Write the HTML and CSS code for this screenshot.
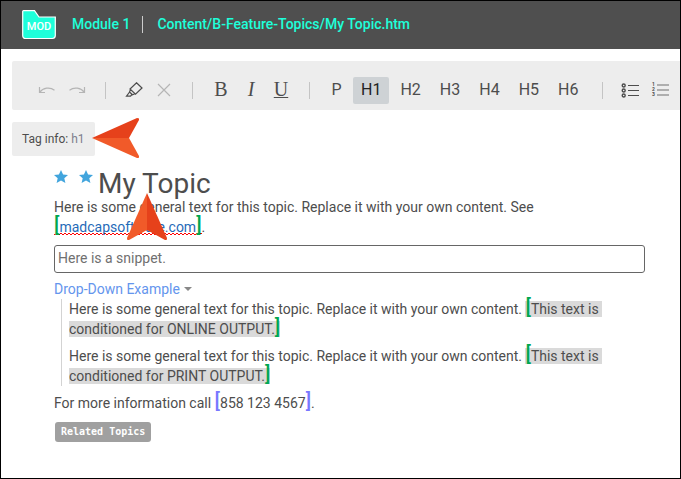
FILE: index.html
```html
<!DOCTYPE html>
<html lang="en">
<head>
<meta charset="utf-8">
<title>My Topic</title>
<link rel="stylesheet" href="styles.css">
</head>
<body>
<header class="header">
  <span class="badge">
    <svg class="badge-shape" viewBox="0 0 34 30" aria-hidden="true"><path d="M.7 1.5Q.7.7 1.5.7H12.5L17 7H33.3V25.5Q33.3 28.5 30.3 28.5H3.7Q.7 28.5.7 25.5Z" fill="#1effda" stroke="#fff" stroke-width="1.2"/></svg>
    <span class="badge-text">MOD</span>
  </span>
  <span class="module">Module 1</span>
  <span class="path">Content/B-Feature-Topics/My Topic.htm</span>
</header>
<main class="editor">
  <div class="toolbar" role="toolbar" aria-label="Formatting">
    <button class="tool muted" aria-label="Undo"><svg viewBox="0 0 18 10"><path d="M1.5 1V6.5H7M1.7 6.3C5 1.6 12 .8 16.5 4.2"/></svg></button>
    <button class="tool muted" aria-label="Redo"><svg viewBox="0 0 18 10"><path d="M16.5 1V6.5H11M16.3 6.3C13 1.6 6 .8 1.5 4.2"/></svg></button>
    <span class="sep"></span>
    <button class="tool" aria-label="Format painter"><svg class="square" viewBox="0 0 18 18"><path d="M11.5 .8L17 6L10.5 12.2L5 7ZM5.5 7.5L4.5 10L7.5 12.8L10 11.7M4.2 10.5L1.5 14.2H5.5L7 12.5"/></svg></button>
    <button class="tool muted" aria-label="Remove"><svg class="square" viewBox="0 0 18 18"><path d="M3 2L15 14M15 2L3 14"/></svg></button>
    <span class="sep"></span>
    <button class="tool letter">B</button>
    <button class="tool letter italic">I</button>
    <button class="tool letter underline">U</button>
    <span class="sep"></span>
    <div class="styles">
      <button class="style">P</button>
      <button class="style active">H1</button>
      <button class="style">H2</button>
      <button class="style">H3</button>
      <button class="style">H4</button>
      <button class="style">H5</button>
      <button class="style">H6</button>
    </div>
    <span class="sep wide"></span>
    <button class="tool" aria-label="Bulleted list"><svg class="square" viewBox="0 0 18 18"><path d="M7 3.5H18M7 8.5H18M7 13.5H18"/><g stroke-width="1.4"><circle cx="2.7" cy="3.5" r="1.5"/><circle cx="2.7" cy="8.5" r="1.5"/><circle cx="2.7" cy="13.5" r="1.5"/></g></svg></button>
    <button class="tool" aria-label="Numbered list"><span class="numbers"><span>1</span><span>2</span><span>3</span></span><svg class="lines" viewBox="0 0 12 18"><path d="M0 3H12M0 8H12M0 13H12" stroke="#999" stroke-width="1.6"/></svg></button>
  </div>
  <div class="tag-info">Tag info: <span class="tag">h1</span>
    <svg class="arrow arrow-left" viewBox="0 0 47 40" aria-hidden="true"><path d="M0 20L45 0Q48 0 47 2L37 20Z" fill="#e6411b"/><path d="M0 20L45 40Q48 40 47 38L37 20Z" fill="#f15a29"/></svg>
  </div>
  <article class="topic">
    <h1 class="title"><svg class="star" viewBox="0 0 14 13" aria-hidden="true"><path d="M7 0L9.1 4.5L14 5L10.3 8.3L11.4 13L7 10.6L2.6 13L3.7 8.3L0 5L4.9 4.5Z"/></svg><svg class="star" viewBox="0 0 14 13" aria-hidden="true"><path d="M7 0L9.1 4.5L14 5L10.3 8.3L11.4 13L7 10.6L2.6 13L3.7 8.3L0 5L4.9 4.5Z"/></svg><span class="title-text">My Topic<svg class="arrow arrow-up" viewBox="0 0 40 47" aria-hidden="true"><path d="M20 0L0 45Q0 48 2 47L20 37Z" fill="#f15a29"/><path d="M20 0L40 45Q40 48 38 47L20 37Z" fill="#e6411b"/></svg></span></h1>
    <p>Here is some general text for this topic. Replace it with your own content. See <span class="spell"><span class="bracket">[</span><a href="#">madcapsoftware.com</a><span class="bracket">]</span></span>.</p>
    <div class="snippet">Here is a snippet.</div>
    <button class="dropdown" aria-expanded="true">Drop-Down Example<span class="caret"></span></button>
    <div class="dropdown-body">
      <p>Here is some general text for this topic. Replace it with your own content. <span class="condition"><span class="bracket">[</span>This text is&nbsp;<wbr>conditioned for ONLINE OUTPUT.<span class="bracket">]</span></span></p>
      <p>Here is some general text for this topic. Replace it with your own content. <span class="condition"><span class="bracket">[</span>This text is&nbsp;<wbr>conditioned for PRINT OUTPUT.<span class="bracket">]</span></span></p>
    </div>
    <p>For more information call <span class="bracket variable">[</span>858 123 4567<span class="bracket variable">]</span>.</p>
    <button class="related">Related Topics</button>
  </article>
</main>
</body>
</html>
```
FILE: styles.css
```css
* { box-sizing: border-box; }
body {
  margin: 0;
  min-height: 100vh;
  border: 1px solid #000;
  background: #fff;
  color: #4d4d4d;
  font: 14px/20px Roboto, sans-serif;
}
button { font: inherit; color: inherit; border: 0; padding: 0; background: none; }
p { margin: 0; }
.header {
  display: flex;
  align-items: center;
  height: 48px;
  padding: 0 0 2px 21px;
  background: #4f4f4f;
  color: #1effda;
  font-weight: 500;
}
.badge { position: relative; width: 34px; height: 28px; }
.badge-shape { display: block; width: 34px; height: 30px; }
.badge-text {
  position: absolute;
  inset: 7px 0 0;
  color: #fff;
  font-size: 11px;
  text-align: center;
}
.module { margin-left: 16px; padding-right: 12px; border-right: 1px solid #ccc; line-height: 17px; }
.path { margin-left: 14px; }
.editor { padding: 12px 0 0 11px; }
.toolbar {
  display: flex;
  align-items: center;
  padding: 16px 0 6px 20px;
  background: #ededed;
  border-radius: 2px 0 0 2px;
}
.tool { display: flex; flex: none; align-items: center; justify-content: center; width: 30px; height: 27px; }
.tool svg { width: 18px; height: 10px; fill: none; stroke: #4d4d4d; stroke-width: 1.2; }
.tool .square { height: 18px; }
.tool .lines { width: 12px; height: 18px; }
.tool.muted svg { stroke: #b5b5b5; }
.numbers { display: grid; margin: 0 2px 2px 0; font: 700 5px/5px Roboto, sans-serif; }
.letter { padding-bottom: 2px; font: 20px/25px "Liberation Serif", serif; }
.italic { font-style: italic; }
.underline { text-decoration: underline; text-decoration-thickness: 1px; }
.sep { flex: none; width: 1px; height: 17px; margin: 0 13px; background: #c4c4c4; }
.sep.wide { margin: 0 12px 0 16px; }
.styles { display: flex; gap: 3px; }
.style { min-width: 27px; padding: 0 8px 2px; border-radius: 2px; font-size: 16px; line-height: 25px; }
.style.active { background: #ced2d5; color: #222; }
.tag-info {
  position: relative;
  width: fit-content;
  margin-top: 12px;
  padding: 7px 10px;
  background: #ededed;
  border-radius: 2px;
  font-size: 12px;
}
.tag { color: #7d7d8c; }
.arrow { position: absolute; }
.arrow-left { left: 80px; top: -4px; width: 47px; height: 40px; }
.arrow-up { left: 29px; top: 27px; width: 40px; height: 47px; }
.topic { margin: 10px 35px 0 42px; }
.title { display: flex; margin: 0; font-size: 28px; font-weight: 400; line-height: 35px; height: 31px; }
.star { width: 14px; height: 13px; margin: 4px 11px 0 0; fill: #42a5dd; }
.star + .star { margin-right: 5px; }
.title-text { position: relative; }
.bracket { color: #00a651; font-size: 20px; font-weight: 500; line-height: 0; }
.bracket.variable { color: #7878ff; }
.spell { background: repeating-conic-gradient(#f00 0 25%, transparent 0 50%) left bottom / 2px 2px repeat-x; background-size: 4px 2px; }
.spell a { color: #1f6ab8; text-decoration: none; }
.snippet { margin: 8px 0 6px; padding: 2px 3px 4px; border: 1px solid #666; border-radius: 3px; color: #707070; }
.dropdown { display: flex; align-items: center; color: #6495ed; }
.caret { margin-left: 4px; border: 4px solid transparent; border-top-color: #888; border-bottom: 0; }
.dropdown-body { margin: 0 0 7px 7px; padding-left: 7px; border-left: 1px solid #d3d3d3; }
.dropdown-body p + p { margin-top: 7px; }
.condition { background: #dadada; }
.related {
  display: block;
  margin: 9px 0 0 1px;
  padding: 0 6px;
  background: #a0a0a0;
  border-radius: 3px;
  color: #fff;
  font: 700 10px/20px "DejaVu Sans Mono", monospace;
}
```
